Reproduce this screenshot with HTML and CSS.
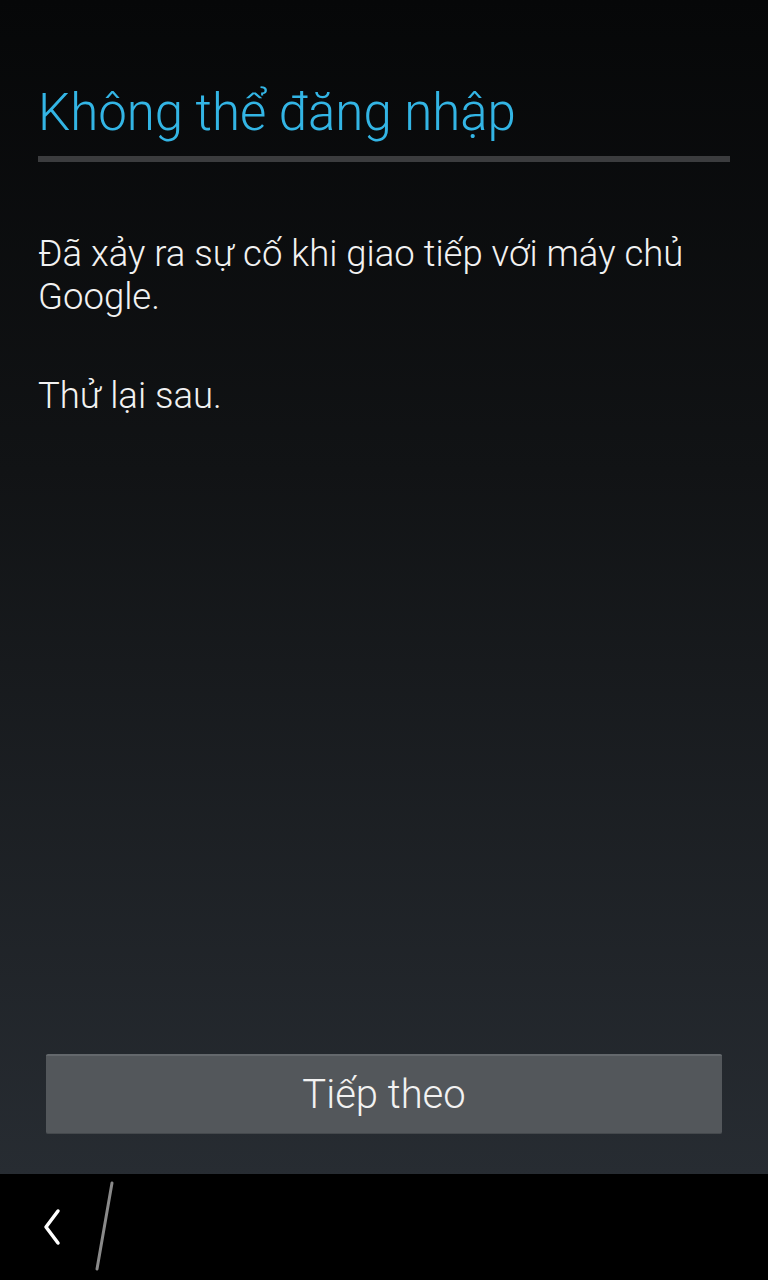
FILE: index.html
```html
<!DOCTYPE html>
<html lang="vi">
<head>
    <meta charset="UTF-8">
    <meta name="viewport" content="width=device-width, initial-scale=1.0">
    <title>Không thể đăng nhập</title>
    <link rel="stylesheet" href="styles.css">
</head>
<body>
    <div class="screen">
        <main class="content">
            <h1 class="title">Không thể đăng nhập</h1>
            <div class="divider"></div>
            <p class="message">Đã xảy ra sự cố khi giao tiếp với máy chủ Google.</p>
            <p class="message">Thử lại sau.</p>
        </main>
        <div class="actions">
            <button class="next-btn">Tiếp theo</button>
        </div>
    </div>
    <nav class="navbar">
        <svg class="back" width="24" height="40" viewBox="0 0 24 40">
            <path d="M18 4 L6 20 L18 36" fill="none" stroke="#fff" stroke-width="3.5" stroke-linecap="round" stroke-linejoin="round"/>
        </svg>
        <svg class="slash" width="24" height="96" viewBox="0 0 24 96">
            <path d="M18 4 L3 90" stroke="#8a8a8a" stroke-width="3" stroke-linecap="round"/>
        </svg>
    </nav>
</body>
</html>
```

FILE: styles.css
```css
html, body {
    margin: 0;
    padding: 0;
}
body {
    width: 768px;
    height: 1280px;
    background: #000;
    font-family: Roboto, "Noto Sans", sans-serif;
    font-weight: 300;
    display: flex;
    flex-direction: column;
    overflow: hidden;
}
.screen {
    height: 1174px;
    display: flex;
    flex-direction: column;
    background: linear-gradient(to bottom, #060708 0%, #111315 40%, #272c32 100%);
}
.content {
    flex: 1;
    padding: 0 38px;
}
.title {
    margin: 0;
    padding-top: 82px;
    font-size: 51px;
    font-weight: 300;
    line-height: 62px;
    color: #33b5e5;
}
.divider {
    height: 6px;
    background: #3b3c3e;
    margin-top: 12px;
}
.message {
    margin: 0;
    color: #f2f2f2;
    font-size: 36.5px;
    line-height: 43px;
}
.divider + .message {
    margin-top: 70px;
}
.message + .message {
    margin-top: 56px;
}
.actions {
    padding: 0 46px 40px 46px;
}
.next-btn {
    width: 676px;
    height: 80px;
    background: #53575b;
    border: none;
    border-top: 2px solid #64686c;
    border-bottom: 1px solid #45494d;
    border-radius: 2px;
    color: #f2f2f2;
    font-family: Roboto, "Noto Sans", sans-serif;
    font-weight: 300;
    font-size: 40px;
    padding: 0;
}
.navbar {
    height: 106px;
    background: #000;
    display: flex;
    align-items: center;
    padding-left: 40px;
    gap: 30px;
}
```
